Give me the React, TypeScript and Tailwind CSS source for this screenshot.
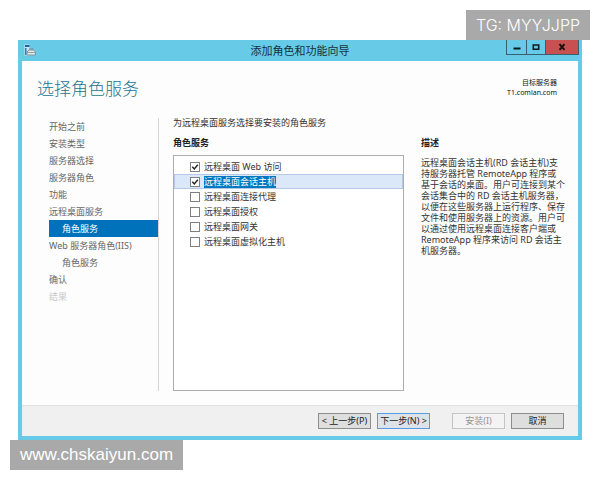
import { useState } from 'react';
import clsx from 'clsx';

type Step = {
  label: string;
  nested?: boolean;
  current?: boolean;
  disabled?: boolean;
};

const STEPS: Step[] = [
  { label: '开始之前' },
  { label: '安装类型' },
  { label: '服务器选择' },
  { label: '服务器角色' },
  { label: '功能' },
  { label: '远程桌面服务' },
  { label: '角色服务', nested: true, current: true },
  { label: 'Web 服务器角色(IIS)' },
  { label: '角色服务', nested: true },
  { label: '确认' },
  { label: '结果', disabled: true },
];

const ROLE_SERVICES = [
  { id: 'web', label: '远程桌面 Web 访问', installed: true },
  { id: 'host', label: '远程桌面会话主机', installed: true },
  { id: 'broker', label: '远程桌面连接代理', installed: false },
  { id: 'license', label: '远程桌面授权', installed: false },
  { id: 'gateway', label: '远程桌面网关', installed: false },
  { id: 'virtual', label: '远程桌面虚拟化主机', installed: false },
];

const DESCRIPTION = [
  '远程桌面会话主机(RD 会话主机)支',
  '持服务器托管 RemoteApp 程序或',
  '基于会话的桌面。用户可连接到某个',
  '会话集合中的 RD 会话主机服务器，',
  '以便在这些服务器上运行程序、保存',
  '文件和使用服务器上的资源。用户可',
  '以通过使用远程桌面连接客户端或',
  'RemoteApp 程序来访问 RD 会话主',
  '机服务器。',
];

function ServerIcon() {
  return (
    <svg className="w-3 h-3" viewBox="0 0 12 12" aria-hidden="true">
      <path d="M0.5 0.5h5v11h-5z" fill="#cfe4f0" />
      <path d="M1 1h4.5v2H1z" fill="#1f62a5" />
      <path d="M1 4h1.6v7H1z" fill="#3c7db3" />
      <path d="M3 8 5 6h4.5l2 2v3H3z" fill="#e4e9ec" stroke="#7d8f99" strokeWidth="0.9" />
      <path d="M5.5 6V4.7H9V6M3 8.5h8.5" fill="none" stroke="#7d8f99" strokeWidth="0.8" />
    </svg>
  );
}

function TitleBar() {
  return (
    <header className="relative flex h-[21px] items-center justify-center">
      <div className="absolute left-0.5 top-1">
        <ServerIcon />
      </div>
      <h1 className="text-[11px] leading-4 text-[#14303c]">添加角色和功能向导</h1>
      <div className="absolute -right-px top-0 flex h-[15px] border-x border-b border-[#35606f]">
        <button aria-label="最小化" className="flex w-5 items-center justify-center border-r border-[#35606f]">
          <svg className="h-2 w-2" viewBox="0 0 8 8"><path d="M0.5 4.5h7v2h-7z" fill="#0b1a20" /></svg>
        </button>
        <button aria-label="最大化" className="flex w-[19px] items-center justify-center border-r border-[#35606f]">
          <svg className="h-2 w-2" viewBox="0 0 8 8"><path d="M1.3 2h5.4v4.2H1.3z" fill="none" stroke="#0b1a20" strokeWidth="1.6" /></svg>
        </button>
        <button aria-label="关闭" className="flex w-8 items-center justify-center bg-[#c75050]">
          <svg className="h-2 w-2" viewBox="0 0 8 8"><path d="M1.5 1.2l5 5.6M6.5 1.2l-5 5.6" stroke="#1a0d0d" strokeWidth="1.9" /></svg>
        </button>
      </div>
    </header>
  );
}

function StepList() {
  return (
    <nav className="w-[110px] shrink-0 border-r border-[#d4d4d4] text-[9px] leading-[17px] text-[#666]">
      {STEPS.map((step, index) => (
        <a
          key={index}
          href={step.disabled ? undefined : '#'}
          aria-current={step.current ? 'step' : undefined}
          className={clsx(
            'block whitespace-nowrap',
            step.nested && 'pl-[13px]',
            step.current && 'bg-[#0072bc] text-white',
            step.disabled && 'text-[#c8c8c8]'
          )}
        >
          {step.label}
        </a>
      ))}
    </nav>
  );
}

function RoleServiceList() {
  const [checked, setChecked] = useState(
    ROLE_SERVICES.filter(service => service.installed).map(service => service.id)
  );
  const selected = 'host';

  const toggle = (id: string) => {
    setChecked(prev => (prev.includes(id) ? prev.filter(item => item !== id) : [...prev, id]));
  };

  return (
    <div className="min-h-[236px] border border-[#adadad] bg-white pt-[3px]">
      {ROLE_SERVICES.map(service => (
        <label
          key={service.id}
          className={clsx(
            'flex h-[15px] items-center gap-1 pl-4',
            service.id === selected && 'bg-[#dbe8f9] outline outline-[#b3c9e6] -outline-offset-1'
          )}
        >
          <span className="grid">
            <input
              type="checkbox"
              checked={checked.includes(service.id)}
              onChange={() => toggle(service.id)}
              className="peer col-start-1 row-start-1 h-2.5 w-2.5 appearance-none border border-[#808080] bg-white"
            />
            <svg
              className="pointer-events-none invisible col-start-1 row-start-1 h-2.5 w-2.5 peer-checked:visible"
              viewBox="0 0 10 10"
            >
              <path d="M2.3 4.8 4.3 7 7.8 2.8" fill="none" stroke="#222" strokeWidth="1.4" />
            </svg>
          </span>
          <span className={clsx('leading-3', service.id === selected && 'bg-[#0078c0] text-white')}>
            {service.label}
          </span>
        </label>
      ))}
    </div>
  );
}

function WizardButton({ label, primary, disabled }: { label: string; primary?: boolean; disabled?: boolean }) {
  return (
    <button
      disabled={disabled}
      className={clsx(
        'h-4 w-[53px] whitespace-nowrap border text-[9px] leading-3',
        disabled && 'border-[#c4c4c4] bg-[#f3f3f3] text-[#959595]',
        primary && 'border-[#569de5] bg-[#dde3e8] text-[#222]',
        !disabled && !primary && 'border-[#8a8f8a] bg-[#dedede] text-[#222]'
      )}
    >
      {label}
    </button>
  );
}

export default function App() {
  return (
    <div className="bg-white px-[18px] py-10 font-['Noto_Sans','Noto_Sans_CJK_SC',sans-serif]">
      <div className="relative">
        <div className="bg-[#67cbe8] px-1 pb-1">
          <TitleBar />
          <main className="bg-[#fdfdfd] text-[9px] text-[#333]">
            <div className="flex h-[57px] items-start justify-between pl-[15px] pr-[21px] pt-4">
              <h2 className="text-[17px] font-light leading-6 text-[#23748f]">选择角色服务</h2>
              <div className="pt-px text-right text-[7px] leading-[10px] text-[#111]">
                <p>目标服务器</p>
                <p>T1.comlan.com</p>
              </div>
            </div>

            <div className="flex pb-3.5 pl-[27px] pr-4">
              <StepList />
              <div className="ml-3.5 min-w-0 flex-1">
                <p className="leading-[10px]">为远程桌面服务选择要安装的角色服务</p>
                <div className="flex gap-[17px] pt-[9px]">
                  <section className="min-w-0 flex-1">
                    <h3 className="mb-1.5 leading-3 font-bold text-[#222]">角色服务</h3>
                    <RoleServiceList />
                  </section>
                  <section className="w-[141px] shrink-0">
                    <h3 className="mb-2 leading-3 font-bold text-[#222]">描述</h3>
                    <p className="whitespace-nowrap leading-[11px]">
                      {DESCRIPTION.map(line => (
                        <span key={line} className="block">{line}</span>
                      ))}
                    </p>
                  </section>
                </div>
              </div>
            </div>

            <footer className="flex h-[31px] items-center justify-end gap-[22px] border-t border-[#dfdfdf] bg-[#f0f0f0] pr-3.5">
              <div className="flex gap-1.5">
                <WizardButton label="< 上一步(P)" />
                <WizardButton label="下一步(N) >" primary />
              </div>
              <div className="flex gap-1.5">
                <WizardButton label="安装(I)" disabled />
                <WizardButton label="取消" />
              </div>
            </footer>
          </main>
        </div>

        {/* Badges hanging over the window corners */}
        <div className="absolute -right-2 bottom-full bg-[#a9a9a9] px-2.5 font-['Inter',sans-serif] text-[16px] font-light leading-[30px] text-white">
          TG: MYYJJPP
        </div>
        <div className="absolute -left-2 top-full bg-[#a9a9a9] px-2.5 font-['Liberation_Sans',sans-serif] text-[17px] leading-[30px] text-white">
          www.chskaiyun.com
        </div>
      </div>
    </div>
  );
}
